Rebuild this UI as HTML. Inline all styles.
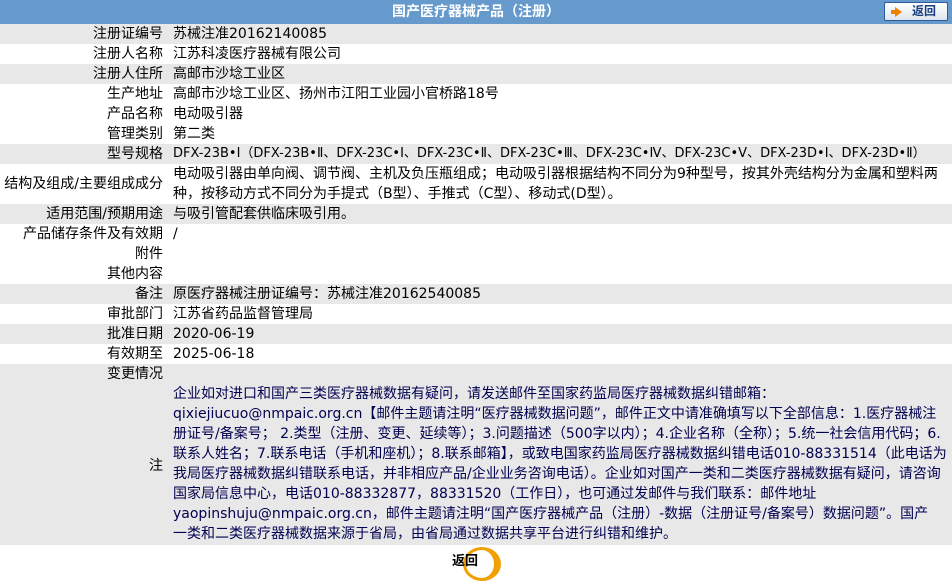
<!DOCTYPE html>
<html><head><meta charset="utf-8"><style>
body{margin:0;width:952px;height:581px;background:#fff;font-family:"DejaVu Sans","Noto Sans CJK SC",sans-serif;font-size:14px;color:#000;position:relative;overflow:hidden}
.hd{position:absolute;left:0;top:0;width:952px;height:24px;background:#6699cc;color:#fff;font-weight:bold;text-align:center;line-height:24px;font-size:14px}
.btn{position:absolute;left:884px;top:2px;width:62px;height:17px;border:1px solid #2a5b9c;border-radius:2px;background:linear-gradient(#fff,#dfe6ee);font-weight:bold;color:#1a3f80;font-size:12px;line-height:17px}
.btn i{position:absolute;left:10px;top:4px;width:0;height:0;border-left:7px solid #f08000;border-top:5px solid transparent;border-bottom:5px solid transparent}
.btn i:before{content:"";position:absolute;left:-11px;top:-2px;width:4px;height:4px;background:#f08000}
.btn span{position:absolute;left:27px;top:0}
.r{position:absolute;left:0;width:952px;line-height:20px}
.g{background:#e8e8e8}
.l{position:absolute;left:0;width:163px;text-align:right;white-space:nowrap}
.v{position:absolute;left:173px;width:776px;white-space:nowrap}
.note{color:#000050}
</style></head><body>
<div class="hd">国产医疗器械产品（注册）</div>
<div class="btn"><i></i><span>返回</span></div>
<div class="r g" style="top:24px;height:20px"><div class="l">注册证编号</div><div class="v">苏械注准20162140085</div></div>
<div class="r" style="top:44px;height:20px"><div class="l">注册人名称</div><div class="v">江苏科凌医疗器械有限公司</div></div>
<div class="r g" style="top:64px;height:20px"><div class="l">注册人住所</div><div class="v">高邮市沙埝工业区</div></div>
<div class="r" style="top:84px;height:20px"><div class="l">生产地址</div><div class="v">高邮市沙埝工业区、扬州市江阳工业园小官桥路18号</div></div>
<div class="r" style="top:104px;height:20px"><div class="l">产品名称</div><div class="v">电动吸引器</div></div>
<div class="r" style="top:124px;height:20px"><div class="l">管理类别</div><div class="v">第二类</div></div>
<div class="r g" style="top:144px;height:20px"><div class="l">型号规格</div><div class="v" style="font-size:13px">DFX-23B•Ⅰ（DFX-23B•Ⅱ、DFX-23C•Ⅰ、DFX-23C•Ⅱ、DFX-23C•Ⅲ、DFX-23C•Ⅳ、DFX-23C•Ⅴ、DFX-23D•Ⅰ、DFX-23D•Ⅱ）</div></div>
<div class="r" style="top:164px;height:40px"><div class="l" style="top:10px">结构及组成/主要组成成分</div><div class="v">电动吸引器由单向阀、调节阀、主机及负压瓶组成；电动吸引器根据结构不同分为9种型号，按其外壳结构分为金属和塑料两<br>种，按移动方式不同分为手提式（B型）、手推式（C型）、移动式(D型）。</div></div>
<div class="r g" style="top:204px;height:20px"><div class="l">适用范围/预期用途</div><div class="v">与吸引管配套供临床吸引用。</div></div>
<div class="r" style="top:224px;height:20px"><div class="l">产品储存条件及有效期</div><div class="v">/</div></div>
<div class="r" style="top:244px;height:20px"><div class="l">附件</div></div>
<div class="r" style="top:264px;height:20px"><div class="l">其他内容</div></div>
<div class="r g" style="top:284px;height:20px"><div class="l">备注</div><div class="v">原医疗器械注册证编号：苏械注准20162540085</div></div>
<div class="r" style="top:304px;height:20px"><div class="l">审批部门</div><div class="v">江苏省药品监督管理局</div></div>
<div class="r g" style="top:324px;height:20px"><div class="l">批准日期</div><div class="v">2020-06-19</div></div>
<div class="r" style="top:344px;height:20px"><div class="l">有效期至</div><div class="v">2025-06-18</div></div>
<div class="r g" style="top:364px;height:181px"><div class="l">变更情况</div>
<div class="l" style="top:92px">注</div>
<div class="v note" style="top:20px">企业如对进口和国产三类医疗器械数据有疑问，请发送邮件至国家药监局医疗器械数据纠错邮箱：<br>qixiejiucuo@nmpaic.org.cn【邮件主题请注明“医疗器械数据问题”，邮件正文中请准确填写以下全部信息：1.医疗器械注<br>册证号/备案号； 2.类型（注册、变更、延续等）；3.问题描述（500字以内）；4.企业名称（全称）；5.统一社会信用代码；6.<br>联系人姓名；7.联系电话（手机和座机）；8.联系邮箱】，或致电国家药监局医疗器械数据纠错电话010-88331514（此电话为<br>我局医疗器械数据纠错联系电话，并非相应产品/企业业务咨询电话）。企业如对国产一类和二类医疗器械数据有疑问，请咨询<br>国家局信息中心，电话010-88332877，88331520（工作日），也可通过发邮件与我们联系：邮件地址<br>yaopinshuju@nmpaic.org.cn，邮件主题请注明“国产医疗器械产品（注册）-数据（注册证号/备案号）数据问题”。国产<br>一类和二类医疗器械数据来源于省局，由省局通过数据共享平台进行纠错和维护。</div></div>
<div style="position:absolute;left:463px;top:547px;width:28px;height:28px;border-radius:50%;border:3px solid #f0a000;border-right-width:7px;background:#fff"></div>
<div style="position:absolute;left:452px;top:553px;font-weight:bold;font-size:13px;line-height:18px">返回</div>
</body></html>
